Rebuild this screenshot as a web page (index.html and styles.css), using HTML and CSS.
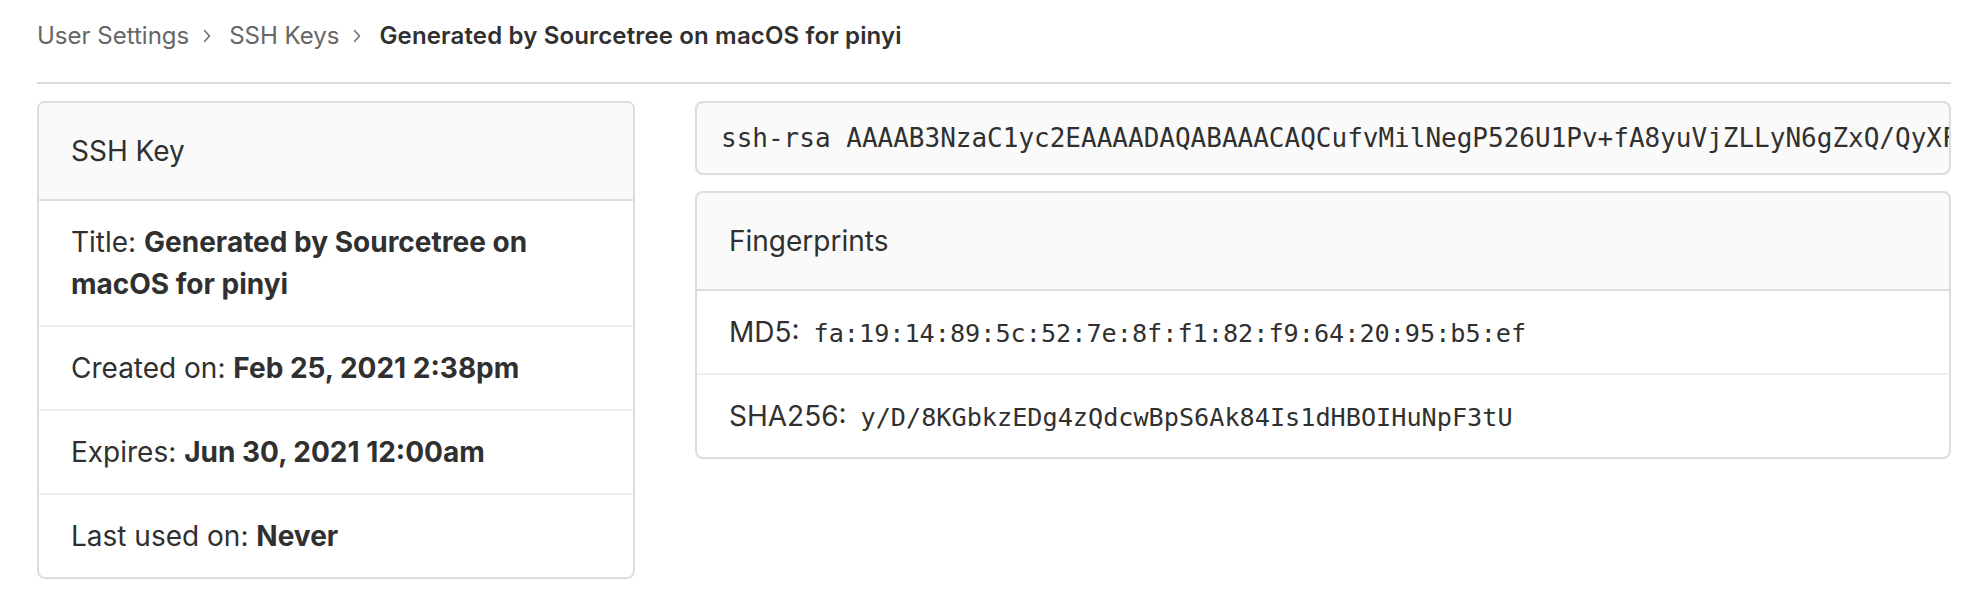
FILE: index.html
```html
<!DOCTYPE html>
<html lang="en">
<head>
<meta charset="utf-8">
<title>SSH Key</title>
<link rel="stylesheet" href="styles.css">
</head>
<body>
<div class="page">
  <nav class="breadcrumbs">
    <a class="crumb" href="#">User Settings</a>
    <svg class="chev" viewBox="0 0 16 16" width="16" height="16"><path d="M5.5 2.5 L10.5 8 L5.5 13.5" fill="none" stroke="#737278" stroke-width="1.6" stroke-linecap="round" stroke-linejoin="round"/></svg>
    <a class="crumb" href="#">SSH Keys</a>
    <svg class="chev" viewBox="0 0 16 16" width="16" height="16"><path d="M5.5 2.5 L10.5 8 L5.5 13.5" fill="none" stroke="#737278" stroke-width="1.6" stroke-linecap="round" stroke-linejoin="round"/></svg>
    <span class="crumb current">Generated by Sourcetree on macOS for pinyi</span>
  </nav>
  <div class="content">
    <div class="card">
      <div class="card-header">SSH Key</div>
      <ul class="list">
        <li><span class="label">Title:</span> <strong>Generated by Sourcetree on macOS for pinyi</strong></li>
        <li><span class="label">Created on:</span> <strong>Feb 25, 2021 2:38pm</strong></li>
        <li><span class="label">Expires:</span> <strong>Jun 30, 2021 12:00am</strong></li>
        <li><span class="label">Last used on:</span> <strong>Never</strong></li>
      </ul>
    </div>
    <div class="right">
      <pre class="key">ssh-rsa AAAAB3NzaC1yc2EAAAADAQABAAACAQCufvMilNegP526U1Pv+fA8yuVjZLLyN6gZxQ/QyXFmT3vKx9dLpQz7wR2hYbN0sJ4uEa8cVfGi5oTk1Dn3mZq pinyi@macOS</pre>
      <div class="card">
        <div class="card-header">Fingerprints</div>
        <ul class="list">
          <li><span class="label">MD5:</span> <code>fa:19:14:89:5c:52:7e:8f:f1:82:f9:64:20:95:b5:ef</code></li>
          <li><span class="label">SHA256:</span> <code>y/D/8KGbkzEDg4zQdcwBpS6Ak84Is1dHBOIHuNpF3tU</code></li>
        </ul>
      </div>
    </div>
  </div>
</div>
</body>
</html>
```

FILE: styles.css
```css
html, body {
  margin: 0;
  padding: 0;
  background: #ffffff;
}

body {
  font-family: Inter, "Liberation Sans", sans-serif;
  color: #303030;
  font-size: 28px;
  line-height: 42px;
}

.page {
  padding: 0 37px;
}

.breadcrumbs {
  display: flex;
  align-items: center;
  height: 40px;
  padding: 16px 0 26px;
  border-bottom: 2px solid #dcdcde;
  font-size: 24px;
  line-height: 40px;
}

.crumb {
  color: #666666;
  text-decoration: none;
  white-space: nowrap;
}

.crumb.current {
  color: #303030;
  font-weight: 600;
  letter-spacing: 0.15px;
}

.chev {
  width: 16px;
  height: 16px;
  margin: 0 14px 0 10px;
  flex: none;
}

.content {
  display: grid;
  grid-template-columns: 598px 1fr;
  column-gap: 60px;
  align-items: start;
  padding-top: 17px;
}

.card {
  border: 2px solid #dcdcde;
  border-radius: 8px;
  overflow: hidden;
  background: #ffffff;
}

.card-header {
  background: #fafafa;
  border-bottom: 2px solid #dcdcde;
  padding: 27px 32px;
}

.list {
  list-style: none;
  margin: 0;
  padding: 0;
}

.list li {
  padding: 20px 32px;
  border-bottom: 2px solid #efefef;
}

.list li:last-child {
  border-bottom: none;
}

.list strong {
  font-weight: 700;
}

.right {
  min-width: 0;
}

.key {
  margin: 0 0 16px;
  padding: 17px 24px;
  background: #fafafa;
  border: 2px solid #dcdcde;
  border-radius: 8px;
  font-family: "DejaVu Sans Mono", monospace;
  font-size: 26px;
  line-height: 36px;
  color: #303030;
  white-space: pre;
  overflow: hidden;
}

code {
  font-family: "DejaVu Sans Mono", monospace;
  font-size: 25.2px;
  line-height: 1;
  margin-left: 6px;
}
```
